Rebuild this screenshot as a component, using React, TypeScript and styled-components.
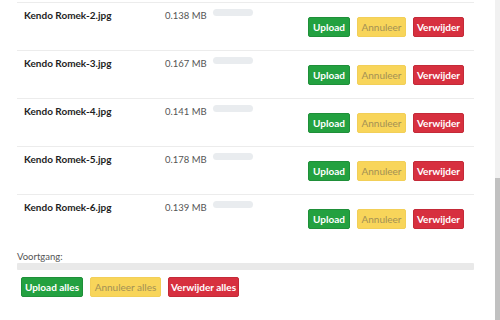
import styled, { createGlobalStyle } from 'styled-components';

const GlobalStyle = createGlobalStyle`
  html, body {
    margin: 0;
    padding: 0;
    background: #fff;
    overflow: hidden;
  }
  body {
    font-family: Lato, "Noto Sans", sans-serif;
    color: #222;
  }
`;

const Page = styled.div`
  display: flex;
  width: 500px;
  height: 320px;
`;

const Content = styled.div`
  flex: 1;
  padding: 2px 21px 0 17px;
  display: flex;
  flex-direction: column;
`;

const FileList = styled.div`
  display: flex;
  flex-direction: column;
`;

const Row = styled.div`
  display: flex;
  align-items: flex-start;
  height: 48px;
  box-sizing: border-box;
  border-top: 1px solid #ececec;
  padding: 0 10px 0 7px;
`;

const FileName = styled.div`
  width: 141px;
  font-size: 10px;
  font-weight: 700;
  color: #1e1e1e;
  margin-top: 6px;
`;

const FileSize = styled.div`
  width: 48px;
  font-size: 9.5px;
  color: #555;
  margin-top: 7px;
`;

const MiniBar = styled.div`
  width: 40px;
  height: 7px;
  margin-top: 6px;
  border-radius: 4px;
  background: #e9ecef;
`;

const Actions = styled.div`
  margin-left: auto;
  margin-top: 14px;
  display: flex;
  gap: 7px;
`;

const palette = {
  success: { bg: '#23a140', fg: '#fff', border: '#1f8f39' },
  warning: { bg: '#f8d55a', fg: '#a39055', border: '#f2cf58' },
  danger: { bg: '#d7303f', fg: '#fff', border: '#c42a38' },
};

const Button = styled.button<{ $variant: keyof typeof palette; $w: number }>`
  width: ${(p) => p.$w}px;
  height: 20px;
  padding: 0;
  border-radius: 2px;
  border: 1px solid ${(p) => palette[p.$variant].border};
  background: ${(p) => palette[p.$variant].bg};
  color: ${(p) => palette[p.$variant].fg};
  font-family: Lato, "Noto Sans", sans-serif;
  font-size: 10px;
  font-weight: ${(p) => (p.$variant === 'warning' ? 400 : 700)};
  cursor: pointer;
`;

const ProgressLabel = styled.div`
  margin-top: 9px;
  font-size: 9.5px;
  color: #555;
`;

const ProgressTrack = styled.div`
  margin-top: 1px;
  height: 7px;
  background: #e9e9e9;
  border-radius: 1px;
`;

const BulkActions = styled.div`
  display: flex;
  gap: 7px;
  margin-top: 7px;
  padding-left: 4px;
`;

const ScrollTrack = styled.div`
  width: 5px;
  background: #f1f1f1;
  display: flex;
  flex-direction: column;
  justify-content: flex-end;
`;

const ScrollThumb = styled.div`
  height: 142px;
  background: #c1c1c1;
`;

const files = [
  { name: 'Kendo Romek-2.jpg', size: '0.138 MB' },
  { name: 'Kendo Romek-3.jpg', size: '0.167 MB' },
  { name: 'Kendo Romek-4.jpg', size: '0.141 MB' },
  { name: 'Kendo Romek-5.jpg', size: '0.178 MB' },
  { name: 'Kendo Romek-6.jpg', size: '0.139 MB' },
];

export default function App() {
  return (
    <Page>
      <GlobalStyle />
      <Content>
        <FileList>
          {files.map((f) => (
            <Row key={f.name}>
              <FileName>{f.name}</FileName>
              <FileSize>{f.size}</FileSize>
              <MiniBar />
              <Actions>
                <Button $variant="success" $w={42}>Upload</Button>
                <Button $variant="warning" $w={49}>Annuleer</Button>
                <Button $variant="danger" $w={51}>Verwijder</Button>
              </Actions>
            </Row>
          ))}
        </FileList>
        <ProgressLabel>Voortgang:</ProgressLabel>
        <ProgressTrack />
        <BulkActions>
          <Button $variant="success" $w={62}>Upload alles</Button>
          <Button $variant="warning" $w={71}>Annuleer alles</Button>
          <Button $variant="danger" $w={71}>Verwijder alles</Button>
        </BulkActions>
      </Content>
      <ScrollTrack>
        <ScrollThumb />
      </ScrollTrack>
    </Page>
  );
}
